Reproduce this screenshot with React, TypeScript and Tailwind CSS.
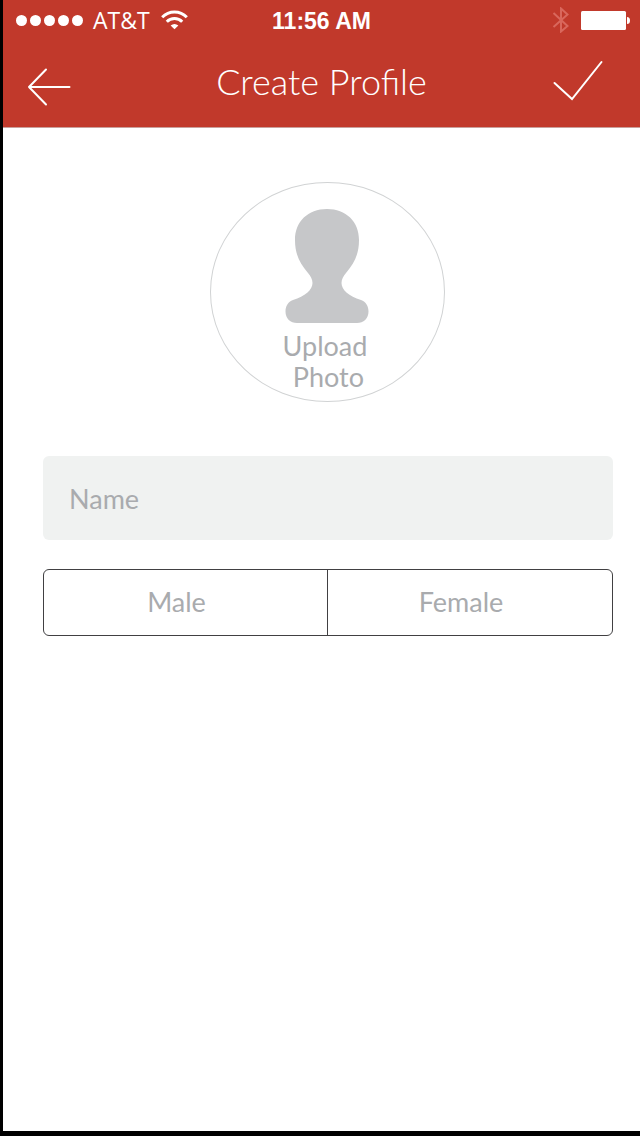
import { useState } from "react";

const genders = ["Male", "Female"];

function StatusBar() {
  return (
    <div className="grid h-10 grid-cols-[1fr_auto_1fr] items-center px-[10px] leading-6">
      <div className="flex items-center pl-[3px]">
        <div className="flex gap-[3px]" role="img" aria-label="Signal strength">
          <span className="size-[11px] rounded-full bg-white" />
          <span className="size-[11px] rounded-full bg-white" />
          <span className="size-[11px] rounded-full bg-white" />
          <span className="size-[11px] rounded-full bg-white" />
          <span className="size-[11px] rounded-full bg-white" />
        </div>
        <span className="ml-[10px] font-['Open_Sans',sans-serif] text-[23px]">AT&amp;T</span>
        <svg className="ml-[11px] h-5 w-[27px]" viewBox="0 0 27 20" fill="none" stroke="#fff" aria-hidden="true">
          <path d="M1.2 7.2C8 .2 19 .2 25.800 7.200" strokeWidth="3" />
          <path d="M5.800 11.800C10 7.500 17 7.500 21.200 11.800" strokeWidth="3" />
          <path d="M13.500 19.200L9.600 15.400Q13.500 12.400 17.400 15.400Z" fill="#fff" stroke="none" />
        </svg>
      </div>
      <time className="pt-0.5 font-['Liberation_Sans',Arial,sans-serif] text-[23px] font-bold">11:56 AM</time>
      <div className="flex items-center justify-end gap-[11px]">
        <svg className="h-[26px] w-[18px]" viewBox="0 0 18 26" fill="none" stroke="#d9675c" strokeWidth="2" aria-hidden="true">
          <path d="M1.500 6L15.500 19L9 24.500V1.500L15.500 7.500L1.500 20" />
        </svg>
        <svg className="h-5 w-[49px]" viewBox="0 0 49 20" fill="#fff" aria-hidden="true">
          <rect x="0" y="1" width="45" height="19" rx="1.500" />
          <path d="M46 7Q49 7 49 10.500T46 14Z" />
        </svg>
      </div>
    </div>
  );
}

function NavBar() {
  return (
    <div className="grid h-[87px] grid-cols-[1fr_auto_1fr] items-start px-6 pt-[19px]">
      <button type="button" aria-label="Back" className="mt-2 justify-self-start">
        <svg className="h-10 w-11" viewBox="0 0 44 40" fill="none" stroke="#fff" strokeWidth="2" strokeLinecap="round" strokeLinejoin="round" aria-hidden="true">
          <path d="M19 2.500L2 20L19 37.500M2 20H42.500" />
        </svg>
      </button>
      <h1 className="font-['Lato',sans-serif] text-[36px] leading-[44px] font-light">Create Profile</h1>
      <button type="button" aria-label="Save profile" className="mr-[13px] justify-self-end">
        <svg className="h-11 w-[52px]" viewBox="0 0 52 44" fill="none" stroke="#fff" strokeWidth="2" strokeLinecap="round" aria-hidden="true">
          <path d="M3.500 24L21 40L50.500 3" />
        </svg>
      </button>
    </div>
  );
}

export default function App() {
  const [name, setName] = useState("");
  const [gender, setGender] = useState("");

  return (
    <div className="min-h-screen border-b-[5px] border-l-[3px] border-black bg-white">
      <header className="border-b border-[#c9a09c] bg-[#c1392b] text-white">
        <StatusBar />
        <NavBar />
      </header>
      <main className="pt-[54px] pr-[27px] pb-10 pl-10 font-['Lato',sans-serif] text-[27px] leading-[31px] text-[#a9abae]">
        <form className="flex flex-col" onSubmit={(e) => e.preventDefault()}>
          <button
            type="button"
            className="mr-0.5 flex h-[220px] w-[235px] flex-col items-center self-center rounded-[50%] border border-[#d1d3d4] pt-[26px]"
          >
            <svg className="h-[114px] w-[84px]" viewBox="0 0 84 114" fill="#c6c7c9" aria-hidden="true">
              <path d="M42 0C61 0 74 12.500 74 31C74 45 69.500 54 61 64C58.500 67 56.500 70 56.500 74C56.500 81 64 87 76 91C81 93 83.500 97 83.500 102.500C83.500 109.500 78.500 114 72 114H12C5.500 114 .5 109.500 .5 102.500C.5 97 3 93 8 91C20 87 27.500 81 27.500 74C27.500 70 25.500 67 23 64C14.500 54 10 45 10 31C10 12.500 23 0 42 0Z" />
            </svg>
            <span className="mt-[7px] pr-1 whitespace-pre">{"Upload\n Photo"}</span>
          </button>
          <input
            type="text"
            aria-label="Name"
            placeholder="Name"
            value={name}
            onChange={(e) => setName(e.target.value)}
            className="mt-[54px] h-[84px] w-full rounded-md bg-[#f0f2f1] px-[26px] text-[#58595b] outline-none placeholder:text-[#a9abae] placeholder:opacity-100"
          />
          <fieldset
            aria-label="Gender"
            className="mt-[29px] grid h-[67px] grid-cols-2 divide-x divide-[#414042] overflow-hidden rounded-md border border-[#414042]"
          >
            {genders.map((option) => (
              <label
                key={option}
                className="relative flex cursor-pointer items-center justify-center pr-[18px] pb-0.5 has-checked:bg-[#f0f2f1]"
              >
                <input
                  type="radio"
                  name="gender"
                  value={option}
                  checked={gender === option}
                  onChange={() => setGender(option)}
                  className="sr-only"
                />
                {option}
              </label>
            ))}
          </fieldset>
        </form>
      </main>
    </div>
  );
}
